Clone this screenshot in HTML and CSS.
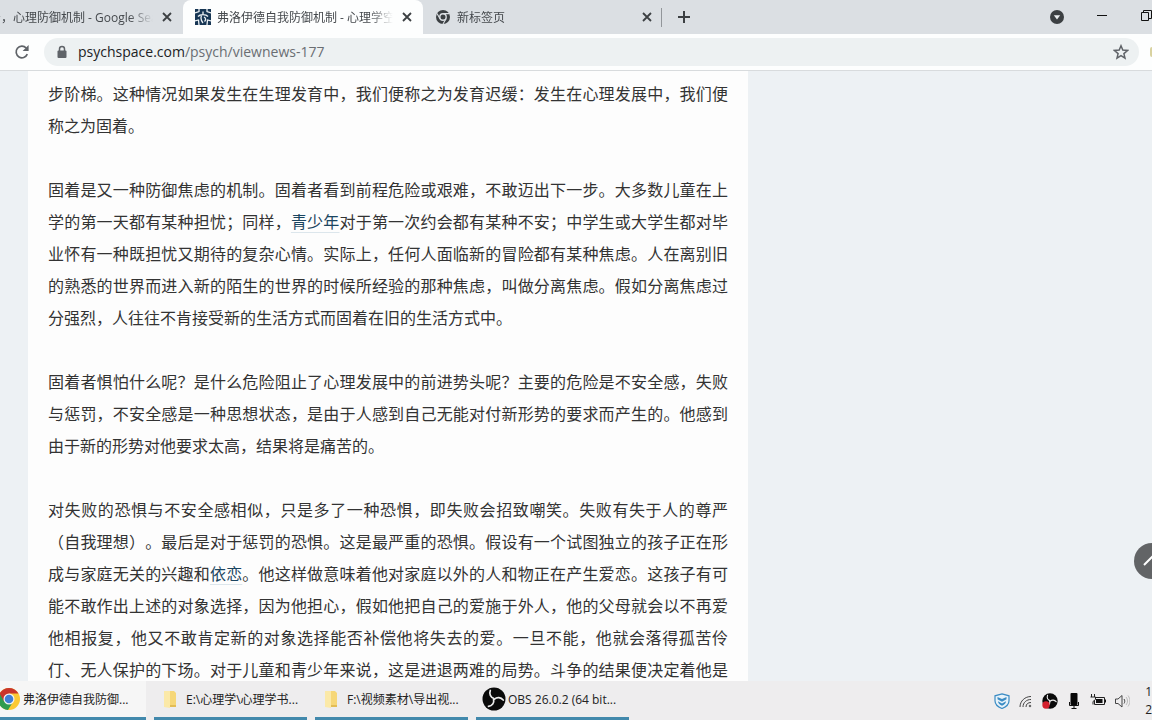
FILE: index.html
```html
<!DOCTYPE html>
<html lang="zh-CN">
<head>
<meta charset="utf-8">
<title>弗洛伊德自我防御机制 - 心理学空间</title>
<link rel="stylesheet" href="styles.css">
</head>
<body>
<svg class="defs" aria-hidden="true">
  <defs>
    <symbol id="x" viewBox="0 0 16 16"><path d="M4 4l8 8M12 4l-8 8" fill="none" stroke="#3c4043" stroke-width="1.8"/></symbol>
    <symbol id="obs" viewBox="0 0 24 24">
      <circle cx="12" cy="12" r="11.5" fill="#0a0a0a"/>
      <g fill="none" stroke="#ececec" stroke-width="1.7" stroke-linecap="round">
        <path d="M12 11.500C8.500 10.500 7 7 8.300 3.500"/>
        <path d="M12 11.500C8.500 10.500 7 7 8.300 3.500" transform="rotate(120 12 12)"/>
        <path d="M12 11.500C8.500 10.500 7 7 8.300 3.500" transform="rotate(240 12 12)"/>
      </g>
    </symbol>
    <symbol id="folder" viewBox="0 0 16 20">
      <path d="M2 2h10l2 2v14H2z" fill="#f6d778"/>
      <path d="M2 2h6v17l-6-1z" fill="#fbe9a8"/>
      <path d="M8 16h6v2H8z" fill="#e3bd55"/>
    </symbol>
  </defs>
</svg>
<header class="browser">
  <div class="tabstrip">
    <div class="tab">
      <span class="favicon"></span>
      <span class="tab-title">固着，心理防御机制 - Google Search</span>
      <button class="close" aria-label="关闭"><svg><use href="#x"/></svg></button>
    </div>
    <div class="tab active">
      <svg class="favicon" viewBox="0 0 16 16">
        <path fill="#173654" d="M0 0h16v16H0z"/>
        <path fill="none" stroke="#eef3f6" stroke-width="1.300" d="M4 0v2.500L0 4M12 0v2.500L16 4M0 12l3.500-1L4 16M16 12l-3.500-1L12 16M8 2.500V6M3 7.500C5 5 11 5 13 7.500M6.500 6.500C5.500 9 5.500 11 8 14M9 8c2 1 2 3 .5 4.500"/>
      </svg>
      <span class="tab-title">弗洛伊德自我防御机制 - 心理学空间</span>
      <button class="close" aria-label="关闭"><svg><use href="#x"/></svg></button>
    </div>
    <div class="tab last">
      <svg class="favicon" viewBox="0 0 16 16">
        <circle cx="8" cy="8" r="7" fill="#3c4043"/>
        <circle cx="8" cy="8" r="3.2" fill="#3c4043" stroke="#dbdfe3" stroke-width="1.4"/>
        <path d="M8 4.6h6.4M5 9.8L2 4.4M11 9.8l-3.1 5.4" stroke="#dbdfe3" stroke-width="1.1"/>
      </svg>
      <span class="tab-title">新标签页</span>
      <button class="close" aria-label="关闭"><svg><use href="#x"/></svg></button>
    </div>
    <button class="new-tab" aria-label="打开新的标签页"><svg viewBox="0 0 16 16"><path d="M8 2v12M2 8h12" stroke="#3c4043" stroke-width="2"/></svg></button>
    <div class="window-controls">
      <button aria-label="搜索标签页"><svg viewBox="0 0 16 16"><circle cx="8" cy="8" r="7" fill="#3c4043"/><path d="M4.8 6.2h6.4L8 10.6z" fill="#eceff1"/></svg></button>
      <button aria-label="最小化"><svg viewBox="0 0 16 16"><path d="M3 6.500h10" stroke="#111" stroke-width="1"/></svg></button>
      <button aria-label="向下还原"><svg viewBox="0 0 16 16"><path d="M2.500 3.500h7v8h-7zM4.500 3.500v-2h8v8h-3" fill="none" stroke="#111"/></svg></button>
    </div>
  </div>
  <div class="toolbar">
    <button class="reload" aria-label="重新加载"><svg viewBox="0 0 16 16"><path d="M13.300 10.200A5.800 5.800 0 1 1 12.200 4" fill="none" stroke="#5f6368" stroke-width="1.700"/><path d="M14.600 1v6H8.600z" fill="#5f6368"/></svg></button>
    <div class="omnibox">
      <svg class="lock" viewBox="0 0 12 14"><path d="M3.500 6V4a2.500 2.500 0 0 1 5 0v2" fill="none" stroke="#5f6368" stroke-width="1.500"/><rect x="1.500" y="5.500" width="9" height="7.500" rx="1" fill="#5f6368"/></svg>
      <a class="url" href="#">psychspace.com<span>/psych/viewnews-177</span></a>
      <button class="star" aria-label="为此标签页添加书签"><svg viewBox="0 0 16 16"><path d="M8 1.800l1.800 4.300 4.700.4-3.600 3.100 1.100 4.600L8 11.700l-4 2.500 1.100-4.600L1.500 6.500l4.700-.4z" fill="none" stroke="#5f6368" stroke-width="1.500"/></svg></button>
    </div>
    <span class="extension"></span>
  </div>
</header>

<main class="page">
  <article class="article">
    <p>步阶梯。这种情况如果发生在生理发育中，我们便称之为发育迟缓：发生在心理发展中，我们便称之为固着。</p>
    <p>固着是又一种防御焦虑的机制。固着者看到前程危险或艰难，不敢迈出下一步。大多数儿童在上学的第一天都有某种担忧；同样，<a href="#">青少年</a>对于第一次约会都有某种不安；中学生或大学生都对毕业怀有一种既担忧又期待的复杂心情。实际上，任何人面临新的冒险都有某种焦虑。人在离别旧的熟悉的世界而进入新的陌生的世界的时候所经验的那种焦虑，叫做分离焦虑。假如分离焦虑过分强烈，人往往不肯接受新的生活方式而固着在旧的生活方式中。</p>
    <p>固着者惧怕什么呢？是什么危险阻止了心理发展中的前进势头呢？主要的危险是不安全感，失败与惩罚，不安全感是一种思想状态，是由于人感到自己无能对付新形势的要求而产生的。他感到由于新的形势对他要求太高，结果将是痛苦的。</p>
    <p class="continued">对失败的恐惧与不安全感相似，只是多了一种恐惧，即失败会招致嘲笑。失败有失于人的尊严（自我理想）。最后是对于惩罚的恐惧。这是最严重的恐惧。假设有一个试图独立的孩子正在形成与家庭无关的兴趣和<a href="#">依恋</a>。他这样做意味着他对家庭以外的人和物正在产生爱恋。这孩子有可能不敢作出上述的对象选择，因为他担心，假如他把自己的爱施于外人，他的父母就会以不再爱他相报复，他又不敢肯定新的对象选择能否补偿他将失去的爱。一旦不能，他就会落得孤苦伶仃、无人保护的下场。对于儿童和青少年来说，这是进退两难的局势。斗争的结果便决定着他是</p>
  </article>
  <button class="to-top" aria-label="返回顶部"><svg viewBox="0 0 36 36"><path d="M10 22l8-8 8 8" fill="none" stroke="#fff" stroke-width="2"/></svg></button>
</main>

<footer class="taskbar">
  <div class="tasks">
    <button class="task current">
      <svg viewBox="0 0 24 24">
        <circle cx="12" cy="12" r="11" fill="#fbc934"/>
        <path d="M12 12L2.500 6.500A11 11 0 0 0 11 23l5.500-9z" fill="#2f9b4f"/>
        <path d="M12 6.500h9.500a11 11 0 0 0-19 0l4.700 8.200z" fill="#c9352b"/>
        <circle cx="12" cy="12" r="5.500" fill="#f4f4f4"/><circle cx="12" cy="12" r="4.300" fill="#3f7fd6"/>
      </svg>
      <span>弗洛伊德自我防御...</span>
    </button>
    <button class="task"><svg><use href="#folder"/></svg><span>E:\心理学\心理学书...</span></button>
    <button class="task"><svg><use href="#folder"/></svg><span>F:\视频素材\导出视...</span></button>
    <button class="task obs"><svg><use href="#obs"/></svg><span>OBS 26.0.2 (64 bit...</span></button>
  </div>
  <div class="tray">
    <svg viewBox="0 0 16 16"><path d="M8 .8l7 2v5c0 4-3 6.200-7 7.700C4 14 1 11.800 1 7.800v-5z" fill="#e8f3fa" stroke="#3b8cc4" stroke-width="1.200"/><path d="M3.500 4l4.500 2 4.500-2v2.200L8 8.700 3.500 6.200zM4 8.200l4 2.300 4-2.300c0 2-2 3.600-4 4.600-2-1-4-2.600-4-4.600z" fill="#3b8cc4"/></svg>
    <svg viewBox="0 0 16 16" fill="none" stroke="#444"><path d="M2 14C2 8 7 3.500 13 3.500M5 14c0-4.500 3.500-7.500 8-7.500M8 14c0-3 2-4.500 5-4.500"/><circle cx="12" cy="13" r=".8"/></svg>
    <svg viewBox="0 0 24 24"><use href="#obs"/><circle cx="6" cy="18" r="5.500" fill="#d3202d"/></svg>
    <svg viewBox="0 0 16 16"><rect x="4.500" y="0" width="7" height="12" rx="1" fill="#080808"/><path d="M3.500 9v3.500h9V9M8 12v3M5.500 15.500h5" fill="none" stroke="#111"/></svg>
    <svg viewBox="0 0 16 16"><path d="M4.500 4.500h10v7h-10z" fill="none" stroke="#222"/><path d="M6 6h6.500v4H6z" fill="#111"/><path d="M15.500 6.500v3" stroke="#111"/><path d="M1.500 1v3M4.500 1v3M.5 4h5v2.500L3 8.500v3" fill="#eee" stroke="#222"/></svg>
    <svg viewBox="0 0 16 16" fill="none" stroke="#444"><path d="M1.500 6v4.500h2.500l4 3.500V2.500L4 6z"/><path d="M10 6c1 1.500 1 3 0 4.500"/><path d="M12 4c2 2.500 2 5.500 0 8M14 2.500c2.500 3.500 2.500 7.500 0 11" stroke="#bbb"/></svg>
    <div class="clock"><span>1</span><span>2</span></div>
  </div>
</footer>
</body>
</html>
```
FILE: styles.css
```css
* { box-sizing: border-box; }
body {
  margin: 0;
  height: 100vh;
  display: flex;
  flex-direction: column;
  overflow: hidden;
  background: #edf1f4;
  color: #333;
  font-family: "Open Sans", "Noto Sans CJK SC", sans-serif;
}
button { border: 0; padding: 0; background: none; font: inherit; color: inherit; display: flex; align-items: center; justify-content: center; flex: none; }
a { color: inherit; text-decoration: none; }
svg { display: block; flex: none; width: 16px; height: 16px; }
.defs { display: none; }

.browser { flex: none; background: #fdfefe; border-bottom: 1px solid #d8dbdd; }
.tabstrip { display: flex; align-items: stretch; height: 34px; margin-left: -57px; background: #dbdfe3; }
.tab {
  flex: 0 1 240px;
  min-width: 0;
  display: flex;
  align-items: center;
  gap: 6px;
  padding: 0 8px 0 12px;
  font-size: 12px;
  color: #45494d;
}
.tab.active { background: #fdfefe; border-radius: 8px 8px 0 0; }
.tab.last { position: relative; }
.tab.last::after { content: ""; position: absolute; right: 1px; top: 8px; height: 19px; border-right: 1px solid #92969a; }
.favicon { flex: none; width: 16px; height: 16px; }
.tab-title {
  flex: 1;
  min-width: 0;
  overflow: hidden;
  white-space: nowrap;
  mask-image: linear-gradient(to right, #000 calc(100% - 24px), transparent);
}
.new-tab { width: 42px; }
.window-controls { display: flex; align-items: center; gap: 29px; margin-left: auto; margin-right: -3px; }

.toolbar { display: flex; align-items: center; gap: 14px; height: 36px; padding-left: 14px; }
.omnibox { flex: 1; display: flex; align-items: center; height: 28px; padding: 0 10px 0 12px; border-radius: 14px; background: #edf1f2; }
.lock { width: 12px; height: 14px; }
.url { flex: 1; margin-left: 10px; font-size: 14px; line-height: 20px; padding-bottom: 1px; color: #202124; }
.url span { color: #6a6e72; }
.extension { width: 2px; height: 10px; margin-left: -3px; background: #d9d2a0; border-radius: 2px 0 0 2px; }

.page { flex: 1; min-height: 0; overflow: hidden; }
.article {
  max-width: 720px;
  min-height: 100%;
  margin-left: 28px;
  padding: 6px 20px 0;
  background: #fdfdfd;
  font-family: "Noto Sans CJK SC", sans-serif;
  font-size: 16px;
  line-height: 32px;
  text-align: justify;
  text-spacing-trim: space-all;
}
.article p { margin: 0 0 32px; }
.article .continued { text-align-last: justify; margin-bottom: 0; }
.article a { color: #1b4560; text-decoration: underline #dce6ec 1px; text-underline-offset: 4px; }
.to-top { position: absolute; right: -18px; bottom: 141px; width: 36px; height: 36px; border-radius: 50%; background: #626466; }
.to-top svg { width: 36px; height: 36px; }

.taskbar { flex: none; display: flex; justify-content: space-between; height: 39px; background: #eeedee; color: #222; font-size: 12px; }
.tasks { display: flex; gap: 8px; margin-left: -7px; }
.task { width: 153px; justify-content: flex-start; gap: 8px; padding: 0 8px; border-bottom: 3px solid #4289ac; white-space: nowrap; }
.task.current { background: #f6f6f6; padding: 0 4px; gap: 2px; }
.task svg { width: 16px; height: 20px; }
.task.current svg, .task.obs svg { width: 24px; height: 24px; }
.task.obs { gap: 2px; padding: 0 6px; }
.tray { display: flex; align-items: center; gap: 8px; }
.clock { display: flex; flex-direction: column; align-items: flex-end; width: 14px; line-height: 18px; }
```
